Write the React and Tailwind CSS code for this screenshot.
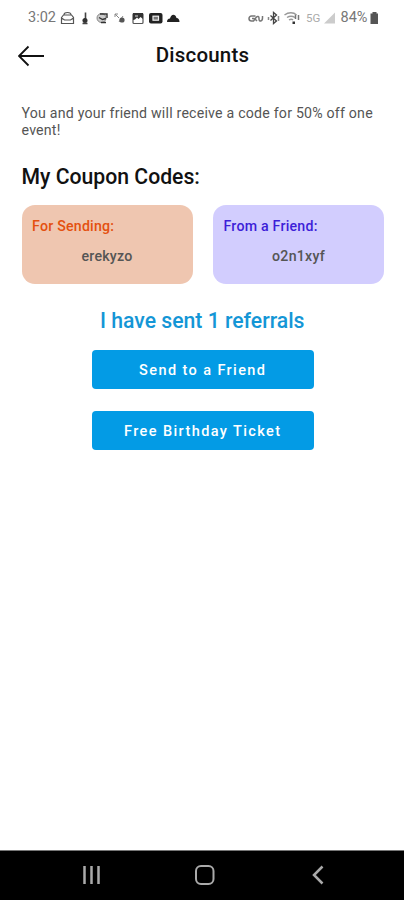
import React from 'react';

const NotificationIcons = () => (
  <svg width="120" height="16" viewBox="0 0 120 16" fill="none" stroke="#555" strokeWidth="1">
    {/* inbox */}
    <path d="M1.500 7.500 3.500 5h8l2 2.500v6h-12zM4 5c0-2 1.500-2.500 3.500-2.500S11 3 11 5M1.500 8l3 2h6l3-2" strokeWidth="1.200" />
    {/* person */}
    <path d="M25.500 2.500v6l-2.500 2M22.500 13.500h5" stroke="#444" strokeWidth="1.600" />
    <circle cx="25" cy="10.500" r="2.500" fill="#333" stroke="none" />
    {/* mail sync */}
    <circle cx="41.500" cy="8" r="4.500" fill="#ccc" stroke="#888" />
    <path d="M40 4h7v4M39 7.500l3.500 2 3.500-1M41 12.500h5" stroke="#333" strokeWidth="1.400" />
    {/* missed call */}
    <path d="M55 4l4 4M55 7V4h3M59 12l4-6" stroke="#888" />
    <circle cx="62" cy="10" r="2.600" fill="#555" stroke="none" />
    {/* gallery */}
    <rect x="73" y="3.500" width="10" height="10" rx="1" stroke="#555" strokeWidth="1.200" />
    <path d="M73 3h10v6l-2.500-2-2 2-1.500-1.500-2 2-2 .5z" fill="#333" stroke="none" />
    <path d="M75 6h3" stroke="#ddd" />
    {/* video */}
    <rect x="89" y="3" width="13.500" height="10.500" rx="2" fill="#222" stroke="none" />
    <rect x="93" y="6.200" width="5.500" height="4" fill="#777" stroke="#eee" strokeWidth="1.200" />
    {/* cloud */}
    <path d="M107 12c0-2 1-3.500 3-3.500 1-5 5.500-5 6.500-.5 2 0 3 2 3 4z" fill="#222" stroke="none" />
  </svg>
);

const ConnectionIcons = () => (
  <svg width="52" height="16" viewBox="0 0 52 16" fill="none" stroke="#777" strokeWidth="1.500">
    {/* vpn key */}
    <path d="M7.500 6H3.500a2.200 2.200 0 0 0 0 5h2l3-4c1-1 2.500-.5 2.500 1v1c0 3 3.500 2.500 3.500-1V6M4 8.500h2.500M7.500 9.500l1.500 1.500" />
    {/* bluetooth */}
    <path d="m22.500 5.500 6 5.500-3 2.500v-11l3 2.500-6 5.500" stroke="#444" strokeWidth="1.300" />
    <path d="M20.500 7v3M30.500 6v5" stroke="#888" />
    {/* wifi */}
    <path d="M36.500 5c4-3 9-3 12 0M39 7.500c3-2 5-2 8 0M41 10c1.500-1 3-1 4 0" stroke="#999" />
    <path d="M47.500 5v4M50.500 5v5" stroke="#777" />
    <rect x="44.500" y="11.500" width="2.500" height="2.500" fill="#333" stroke="none" />
  </svg>
);

const StatusBar = () => (
  <div className="flex h-9 items-center pl-[28px] text-[#777]">
    <span className="w-8 text-[14.500px] leading-4">3:02</span>
    <NotificationIcons />
    <div className="ml-[68px]">
      <ConnectionIcons />
    </div>
    <span className="ml-[6px] w-[18px] text-[11.500px] leading-4 text-[#aaa]">5G</span>
    <svg width="12" height="12" viewBox="0 0 12 12">
      <path d="M0 11.500 11 .5v11z" fill="#ccc" />
    </svg>
    <span className="ml-[4.500px] w-[29px] text-[14.500px] leading-4">84%</span>
    <svg width="9" height="12" viewBox="0 0 9 12">
      <path d="M2.500 0h4v1.500H8V12H.5V1.500h2z" fill="#555" />
    </svg>
  </div>
);

const CouponCard = ({ label, code, className }) => (
  <div className={`h-[79px] flex-1 rounded-[13px] px-[10.500px] pt-3 ${className}`}>
    <p className="text-[14.200px] leading-[18px] font-medium tracking-[0.220px]">{label}</p>
    <p className="mt-3 text-center text-[14.200px] leading-[18px] font-medium tracking-[0.220px] text-[#555]">{code}</p>
  </div>
);

const Button = ({ children }) => (
  <button className="h-[39px] w-[222px] rounded-[4px] bg-[#039be5] pt-0.5 text-[14.500px] font-medium tracking-[1.400px] text-white">
    {children}
  </button>
);

const NavBar = () => (
  <div className="h-[50px] border-t border-[#777] bg-black">
    <svg width="404" height="49" viewBox="0 0 404 49" fill="none" stroke="#aaa" strokeWidth="2">
      <path d="M84.500 15v18M91.500 15v18M98.500 15v18" strokeWidth="2.500" />
      <rect x="196" y="15" width="17.500" height="18" rx="5" />
      <path d="m322.500 15.500-8.500 8.500 8.500 8.500" strokeWidth="2.500" />
    </svg>
  </div>
);

const App = () => {
  return (
    <div className="flex h-[900px] w-[404px] flex-col bg-white font-[Roboto,sans-serif]">
      <StatusBar />
      <header className="grid h-[38px] grid-cols-[1fr_auto_1fr] items-center pl-[18px] pr-[17px]">
        <svg className="mt-0.5" width="27" height="22" viewBox="0 0 27 22" fill="none" stroke="#111" strokeWidth="1.800">
          <path d="M26 11H1M10.500 1.500 1 11l9.500 9.500" />
        </svg>
        <h1 className="text-[20.500px] leading-6 font-medium tracking-[0.200px] text-[#111]">Discounts</h1>
      </header>
      <main className="flex flex-1 flex-col pt-[31px] pr-5 pl-[21.500px]">
        <p className="text-[14.200px] leading-[17px] tracking-[0.200px] text-[#555]">
          You and your friend will receive a code for 50% off one event!
        </p>
        <h2 className="mt-[25px] text-[21.200px] leading-[26px] font-medium text-[#111]">My Coupon Codes:</h2>
        <div className="mt-[15px] flex gap-[20.500px]">
          <CouponCard label="For Sending:" code="erekyzo" className="bg-[#efc6b0] text-[#e4500f]" />
          <CouponCard label="From a Friend:" code="o2n1xyf" className="bg-[#d2cdfe] text-[#3d1ed8]" />
        </div>
        <p className="mt-6 -ml-px text-center text-[21.200px] leading-[26px] font-medium text-[#1496d6]">
          I have sent 1 referrals
        </p>
        <div className="mt-4 flex flex-col items-center gap-[22px]">
          <Button>Send to a Friend</Button>
          <Button>Free Birthday Ticket</Button>
        </div>
      </main>
      <NavBar />
    </div>
  );
};

export default App;
